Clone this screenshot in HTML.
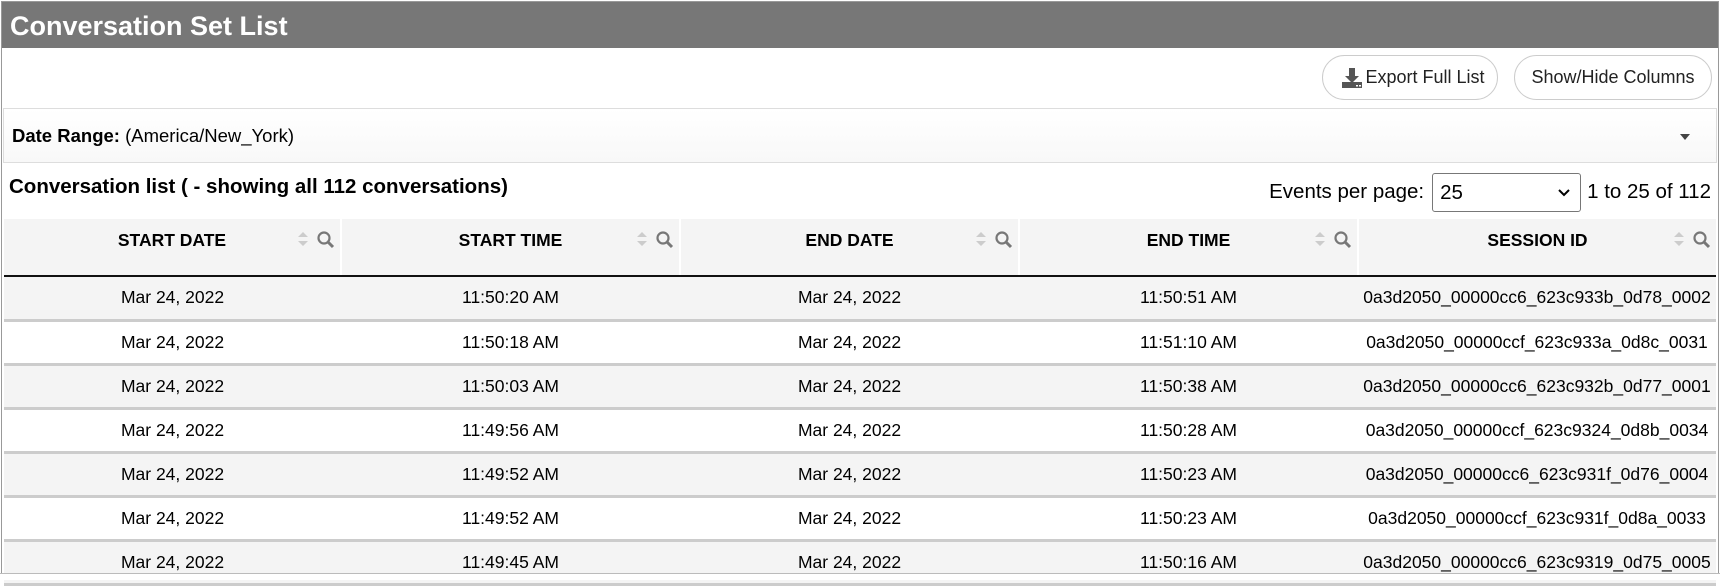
<!DOCTYPE html>
<html><head><style>
*{box-sizing:border-box;margin:0;padding:0}
body{width:1720px;height:580px;overflow:hidden;background:#fff;font-family:"Liberation Sans",Arial,sans-serif;color:#000;position:relative}
.frame{position:absolute;left:1px;top:1px;width:1718px;height:579px;border:1px solid #999;border-bottom:none}
.hdr{position:absolute;left:2px;top:2px;width:1716px;height:46px;background:#777;color:#fff;font-weight:bold;font-size:27px;line-height:48px;padding-left:8px}
.btn{position:absolute;top:55px;height:45px;border:1px solid #ccc;border-radius:23px;font-size:18px;line-height:43px;color:#222;background:#fff;text-align:center}
.dr{position:absolute;left:3px;top:108px;width:1714px;height:55px;border:1px solid #ddd;background:linear-gradient(#fff,#f8f8f8);font-size:18.5px;line-height:53px;padding-left:8px}
.caret{position:absolute;right:26px;top:25px;width:0;height:0;border-left:5px solid transparent;border-right:5px solid transparent;border-top:6px solid #444}
.cl{position:absolute;left:9px;top:175px;font-size:20.5px;font-weight:bold}
.epp{position:absolute;top:172px;right:9px;font-size:20.5px;line-height:40px;display:flex;align-items:center}
.sel{width:149px;height:39px;border:1px solid #777;border-radius:3px;margin:0 6px 0 8px;position:relative;padding-left:7px;font-size:20.5px;line-height:37px}
table{position:absolute;left:4px;top:219px;width:1712px;border-collapse:collapse;table-layout:fixed}
th{height:57px;background:#f4f4f4;font-size:17.5px;font-weight:bold;text-align:center;vertical-align:top;padding-top:11px;border-right:2px solid #fff;border-bottom:2px solid #111;position:relative}
th:last-child{border-right:none}
td{height:44px;font-size:17.5px;text-align:center;border-bottom:3px solid #ccc;white-space:nowrap;overflow:visible}
tr.o td{background:#f4f4f4}
.ic{position:absolute;right:4px;top:10px}
</style></head><body>
<div class="frame"></div>
<div class="hdr">Conversation Set List</div>
<div class="btn" style="left:1322px;width:176px;padding-left:30px">Export Full List
<svg style="position:absolute;left:18px;top:11px" width="22" height="22" viewBox="0 0 22 22"><path d="M8 1h6v8h4l-7 7-7-7h4z" fill="#555"/><rect x="1" y="15" width="20" height="6" fill="#555"/><rect x="15" y="18" width="2" height="1.5" fill="#fff"/><rect x="18" y="18" width="2" height="1.5" fill="#fff"/></svg></div>
<div class="btn" style="left:1514px;width:198px">Show/Hide Columns</div>
<div class="dr"><b>Date Range:</b> (America/New_York)<div class="caret"></div></div>
<div class="cl">Conversation list ( - showing all 112 conversations)</div>
<div class="epp">Events per page:<div class="sel">25<svg style="position:absolute;right:10px;top:15px" width="12" height="8" viewBox="0 0 12 8"><path d="M1 1l5 5 5-5" stroke="#000" stroke-width="2" fill="none"/></svg></div>1 to 25 of 112</div>
<table>
<colgroup><col style="width:337px"><col style="width:339px"><col style="width:339px"><col style="width:339px"><col></colgroup>
<tr>
<th>START DATE<svg class="ic" width="40" height="22" viewBox="0 0 40 22"><path d="M2 8l5-5 5 5zM2 12l5 5 5-5z" fill="#ccc"/><circle cx="28" cy="9" r="5.5" stroke="#777" stroke-width="2.2" fill="none"/><path d="M32 13l5 5" stroke="#777" stroke-width="3"/></svg></th>
<th>START TIME<svg class="ic" width="40" height="22" viewBox="0 0 40 22"><path d="M2 8l5-5 5 5zM2 12l5 5 5-5z" fill="#ccc"/><circle cx="28" cy="9" r="5.5" stroke="#777" stroke-width="2.2" fill="none"/><path d="M32 13l5 5" stroke="#777" stroke-width="3"/></svg></th>
<th>END DATE<svg class="ic" width="40" height="22" viewBox="0 0 40 22"><path d="M2 8l5-5 5 5zM2 12l5 5 5-5z" fill="#ccc"/><circle cx="28" cy="9" r="5.5" stroke="#777" stroke-width="2.2" fill="none"/><path d="M32 13l5 5" stroke="#777" stroke-width="3"/></svg></th>
<th>END TIME<svg class="ic" width="40" height="22" viewBox="0 0 40 22"><path d="M2 8l5-5 5 5zM2 12l5 5 5-5z" fill="#ccc"/><circle cx="28" cy="9" r="5.5" stroke="#777" stroke-width="2.2" fill="none"/><path d="M32 13l5 5" stroke="#777" stroke-width="3"/></svg></th>
<th>SESSION ID<svg class="ic" width="40" height="22" viewBox="0 0 40 22"><path d="M2 8l5-5 5 5zM2 12l5 5 5-5z" fill="#ccc"/><circle cx="28" cy="9" r="5.5" stroke="#777" stroke-width="2.2" fill="none"/><path d="M32 13l5 5" stroke="#777" stroke-width="3"/></svg></th>
</tr>
<tr class="o"><td>Mar 24, 2022</td><td>11:50:20 AM</td><td>Mar 24, 2022</td><td>11:50:51 AM</td><td>0a3d2050_00000cc6_623c933b_0d78_0002</td></tr>
<tr><td>Mar 24, 2022</td><td>11:50:18 AM</td><td>Mar 24, 2022</td><td>11:51:10 AM</td><td>0a3d2050_00000ccf_623c933a_0d8c_0031</td></tr>
<tr class="o"><td>Mar 24, 2022</td><td>11:50:03 AM</td><td>Mar 24, 2022</td><td>11:50:38 AM</td><td>0a3d2050_00000cc6_623c932b_0d77_0001</td></tr>
<tr><td>Mar 24, 2022</td><td>11:49:56 AM</td><td>Mar 24, 2022</td><td>11:50:28 AM</td><td>0a3d2050_00000ccf_623c9324_0d8b_0034</td></tr>
<tr class="o"><td>Mar 24, 2022</td><td>11:49:52 AM</td><td>Mar 24, 2022</td><td>11:50:23 AM</td><td>0a3d2050_00000cc6_623c931f_0d76_0004</td></tr>
<tr><td>Mar 24, 2022</td><td>11:49:52 AM</td><td>Mar 24, 2022</td><td>11:50:23 AM</td><td>0a3d2050_00000ccf_623c931f_0d8a_0033</td></tr>
<tr class="o"><td>Mar 24, 2022</td><td>11:49:45 AM</td><td>Mar 24, 2022</td><td>11:50:16 AM</td><td>0a3d2050_00000cc6_623c9319_0d75_0005</td></tr>
</table>
<div style="position:absolute;left:0;top:573px;width:1720px;height:7px;background:#fff;border-top:1px solid #bbb"></div>
</body></html>
